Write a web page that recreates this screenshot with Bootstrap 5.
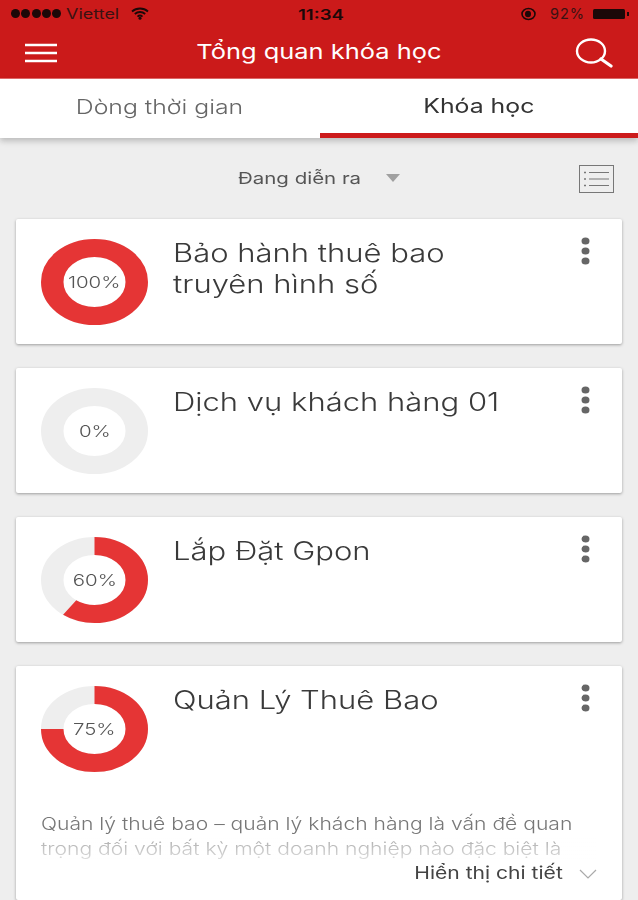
<!DOCTYPE html>
<html lang="vi">

<head>
    <meta charset="UTF-8">
    <meta name="viewport" content="width=device-width, initial-scale=1">
    <title>Tổng quan khóa học</title>
    <link href="https://cdn.jsdelivr.net/npm/bootstrap@5.3.0/dist/css/bootstrap.min.css" rel="stylesheet">
    <style>
        body {
            background: #eeeeee;
            font-family: "Inter", "Noto Sans", sans-serif;
            font-weight: 300;
            color: #333;
            height: 900px;
            overflow: hidden;
            filter: blur(.45px);
        }

        /* the capture is stretched sideways, text follows it */
        .sx {
            display: inline-block;
            transform: scaleX(1.24);
        }

        .sx-l {
            transform-origin: left center;
        }

        .sx-r {
            transform-origin: right center;
        }

        .app-head {
            background: #cb1a1a;
            height: 79px;
            border-bottom: 1px solid #e56a6a;
        }

        .status-row {
            height: 27px;
            padding: 0 8px 0 11px;
            font-size: 14.5px;
            font-weight: 400;
            color: #3a1212;
        }

        .status-dot {
            width: 9px;
            height: 9px;
            margin-right: 1.3px;
            background: #1c0808;
            border-radius: 50%;
        }

        .wifi-icon {
            margin-left: 22px;
        }

        .alarm-icon {
            margin-right: 13px;
        }

        .status-pct {
            letter-spacing: 1px;
        }

        .status-time {
            left: 298px;
            top: 4px;
            font-weight: 600;
            font-size: 15px;
            color: #1c0808;
        }

        .title-row {
            height: 51px;
            padding: 0 25px;
        }

        .title-text {
            color: #fff;
            font-size: 20.5px;
            font-weight: 400;
            margin-left: 6px;
        }

        .tab-row {
            background: #fff;
            height: 59px;
            box-shadow: 0 3px 6px rgba(0, 0, 0, .22);
        }

        .tab-cell {
            font-size: 20px;
            font-weight: 300;
            color: #666;
            padding-bottom: 4px;
        }

        .tab-on {
            color: #333;
            font-weight: 400;
            border-bottom: 5px solid #cc1a1b;
            padding-bottom: 0;
            width: 318px;
            flex: none;
        }

        .filter-row {
            height: 81px;
            padding: 0 24px 0 238px;
            font-size: 16.5px;
            font-weight: 400;
            color: #555;
        }

        .tri-icon {
            margin-left: 49px;
            margin-bottom: 2px;
        }

        .course-box {
            margin: 0 16px 24px;
            height: 125px;
            padding: 20px 25px 0;
            border: 0;
            border-radius: 2px;
            box-shadow: 0 1px 3px rgba(0, 0, 0, .35);
        }

        .course-long {
            height: 234px;
            margin-bottom: 0;
        }

        .donut-wrap {
            width: 107px;
            height: 86px;
            flex: none;
        }

        .donut-wrap svg {
            display: block;
            width: 100%;
            height: 100%;
        }

        .donut-label {
            font-size: 16.5px;
            color: #555;
        }

        .course-title {
            font-size: 25px;
            line-height: 31px;
            margin: -1px 0 0 25px;
            color: #3a3a3a;
            width: 275px;
            transform: scaleX(1.24);
            transform-origin: left center;
        }

        .kebab {
            right: 32px;
            top: 18px;
        }

        .course-desc {
            margin-top: 40px;
            font-size: 17px;
            line-height: 25px;
            color: #777;
            width: 470px;
            height: 50px;
            overflow: hidden;
            transform: scaleX(1.24);
            transform-origin: left center;
        }

        .more-row {
            right: 25px;
            top: 195px;
            font-size: 17px;
            font-weight: 400;
            color: #444;
        }

        .desc-fade {
            left: 25px;
            right: 25px;
            top: 170px;
            height: 24px;
            background: linear-gradient(to bottom, rgba(255, 255, 255, .35), rgba(255, 255, 255, .75));
        }
    </style>
</head>

<body>
    <header class="app-head">
        <div class="status-row d-flex align-items-center position-relative">
            <span class="status-dot"></span><span class="status-dot"></span><span class="status-dot"></span><span class="status-dot"></span><span class="status-dot"></span>
            <span class="ms-1 sx sx-l">Viettel</span>
            <svg class="wifi-icon" width="18" height="13" viewBox="0 0 18 13">
                <path d="M1 4.5C5.5 .5 12.5 .5 17 4.5M3.8 7C6.8 4.3 11.2 4.3 14.2 7M6.5 9.6C8 8.2 10 8.2 11.5 9.6" fill="none" stroke="#1c0808" stroke-width="1.8" />
                <circle cx="9" cy="11.3" r="1.5" fill="#1c0808" />
            </svg>
            <span class="status-time position-absolute sx sx-l">11:34</span>
            <svg class="ms-auto alarm-icon" width="17" height="14" viewBox="0 0 17 14">
                <ellipse cx="8.5" cy="7" rx="6.5" ry="5.5" fill="none" stroke="#1c0808" stroke-width="1.6" />
                <ellipse cx="8" cy="7" rx="3" ry="3.2" fill="#1c0808" />
            </svg>
            <span class="status-pct">92%</span>
            <svg class="ms-2" width="37" height="12" viewBox="0 0 37 12">
                <rect x="0" y="1" width="32" height="10" rx="1.5" fill="#1c0808" />
                <rect x="34" y="4" width="2" height="4" fill="#1c0808" />
            </svg>
        </div>
        <div class="title-row d-flex align-items-center justify-content-between">
            <svg width="32" height="20" viewBox="0 0 32 20">
                <path d="M0 2H32M0 10H32M0 18H32" stroke="#fff" stroke-width="2.4" />
            </svg>
            <span class="title-text sx">Tổng quan khóa học</span>
            <svg width="38" height="30" viewBox="0 0 38 30">
                <ellipse cx="16" cy="13" rx="14" ry="11.5" fill="none" stroke="#fff" stroke-width="2.4" />
                <path d="M26 21L36 28" stroke="#fff" stroke-width="3.2" stroke-linecap="round" />
            </svg>
        </div>
    </header>

    <nav class="tab-row d-flex">
        <div class="tab-cell flex-grow-1 d-flex align-items-center justify-content-center"><span class="sx">Dòng thời gian</span></div>
        <div class="tab-cell tab-on d-flex align-items-center justify-content-center"><span class="sx">Khóa học</span></div>
    </nav>

    <div class="filter-row d-flex align-items-center">
        <span class="sx sx-l">Đang diễn ra</span>
        <svg class="tri-icon" width="14" height="8" viewBox="0 0 14 8">
            <path d="M0 0H14L7 8Z" fill="#a0a0a0" />
        </svg>
        <svg class="ms-auto" width="35" height="28" viewBox="0 0 35 28">
            <rect x=".5" y=".5" width="34" height="27" fill="none" stroke="#777" />
            <path d="M10 7.5H30M10 14H30M10 20.5H30" stroke="#777" stroke-width="1.2" />
            <path d="M5 7.5H7M5 14H7M5 20.5H7" stroke="#777" stroke-width="1.6" />
        </svg>
    </div>

    <div class="card course-box position-relative">
        <div class="d-flex">
            <div class="donut-wrap position-relative">
                <svg viewBox="0 0 100 100" preserveAspectRatio="none">
                    <circle cx="50" cy="50" r="39.5" fill="none" stroke="#eeeeee" stroke-width="21" />
                    <circle cx="50" cy="50" r="39.5" fill="none" stroke="#e53535" stroke-width="21" pathLength="100" stroke-dasharray="100 0" transform="rotate(-90 50 50)" />
                </svg>
                <div class="donut-label position-absolute top-0 bottom-0 start-0 end-0 d-flex align-items-center justify-content-center"><span class="sx">100%</span></div>
            </div>
            <div class="course-title">Bảo hành thuê bao truyên hình số</div>
        </div>
        <svg class="kebab position-absolute" width="9" height="28" viewBox="0 0 9 28">
            <ellipse cx="4.5" cy="4" rx="4" ry="3.5" fill="#666" />
            <ellipse cx="4.5" cy="14" rx="4" ry="3.5" fill="#666" />
            <ellipse cx="4.5" cy="24" rx="4" ry="3.5" fill="#666" />
        </svg>
    </div>

    <div class="card course-box position-relative">
        <div class="d-flex">
            <div class="donut-wrap position-relative">
                <svg viewBox="0 0 100 100" preserveAspectRatio="none">
                    <circle cx="50" cy="50" r="39.5" fill="none" stroke="#eeeeee" stroke-width="21" />
                </svg>
                <div class="donut-label position-absolute top-0 bottom-0 start-0 end-0 d-flex align-items-center justify-content-center"><span class="sx">0%</span></div>
            </div>
            <div class="course-title">Dịch vụ khách hàng 01</div>
        </div>
        <svg class="kebab position-absolute" width="9" height="28" viewBox="0 0 9 28">
            <ellipse cx="4.5" cy="4" rx="4" ry="3.5" fill="#666" />
            <ellipse cx="4.5" cy="14" rx="4" ry="3.5" fill="#666" />
            <ellipse cx="4.5" cy="24" rx="4" ry="3.5" fill="#666" />
        </svg>
    </div>

    <div class="card course-box position-relative">
        <div class="d-flex">
            <div class="donut-wrap position-relative">
                <svg viewBox="0 0 100 100" preserveAspectRatio="none">
                    <circle cx="50" cy="50" r="39.5" fill="none" stroke="#eeeeee" stroke-width="21" />
                    <circle cx="50" cy="50" r="39.5" fill="none" stroke="#e53535" stroke-width="21" pathLength="100" stroke-dasharray="60 40" transform="rotate(-90 50 50)" />
                </svg>
                <div class="donut-label position-absolute top-0 bottom-0 start-0 end-0 d-flex align-items-center justify-content-center"><span class="sx">60%</span></div>
            </div>
            <div class="course-title">Lắp Đặt Gpon</div>
        </div>
        <svg class="kebab position-absolute" width="9" height="28" viewBox="0 0 9 28">
            <ellipse cx="4.5" cy="4" rx="4" ry="3.5" fill="#666" />
            <ellipse cx="4.5" cy="14" rx="4" ry="3.5" fill="#666" />
            <ellipse cx="4.5" cy="24" rx="4" ry="3.5" fill="#666" />
        </svg>
    </div>

    <div class="card course-box course-long position-relative">
        <div class="d-flex">
            <div class="donut-wrap position-relative">
                <svg viewBox="0 0 100 100" preserveAspectRatio="none">
                    <circle cx="50" cy="50" r="39.5" fill="none" stroke="#eeeeee" stroke-width="21" />
                    <circle cx="50" cy="50" r="39.5" fill="none" stroke="#e53535" stroke-width="21" pathLength="100" stroke-dasharray="75 25" transform="rotate(-90 50 50)" />
                </svg>
                <div class="donut-label position-absolute top-0 bottom-0 start-0 end-0 d-flex align-items-center justify-content-center"><span class="sx">75%</span></div>
            </div>
            <div class="course-title">Quản Lý Thuê Bao</div>
        </div>
        <svg class="kebab position-absolute" width="9" height="28" viewBox="0 0 9 28">
            <ellipse cx="4.5" cy="4" rx="4" ry="3.5" fill="#666" />
            <ellipse cx="4.5" cy="14" rx="4" ry="3.5" fill="#666" />
            <ellipse cx="4.5" cy="24" rx="4" ry="3.5" fill="#666" />
        </svg>
        <p class="course-desc mb-0">Quản lý thuê bao – quản lý khách hàng là vấn đề quan trọng đối với bất kỳ một doanh nghiệp nào đặc biệt là</p>
        <div class="desc-fade position-absolute"></div>
        <div class="more-row position-absolute d-flex align-items-center gap-3">
            <span class="sx sx-r">Hiển thị chi tiết</span>
            <svg width="18" height="10" viewBox="0 0 18 10">
                <path d="M1 1L9 9L17 1" fill="none" stroke="#aaa" stroke-width="1.2" />
            </svg>
        </div>
    </div>

    <script src="https://cdn.jsdelivr.net/npm/bootstrap@5.3.0/dist/js/bootstrap.bundle.min.js"></script>
</body>

</html>
